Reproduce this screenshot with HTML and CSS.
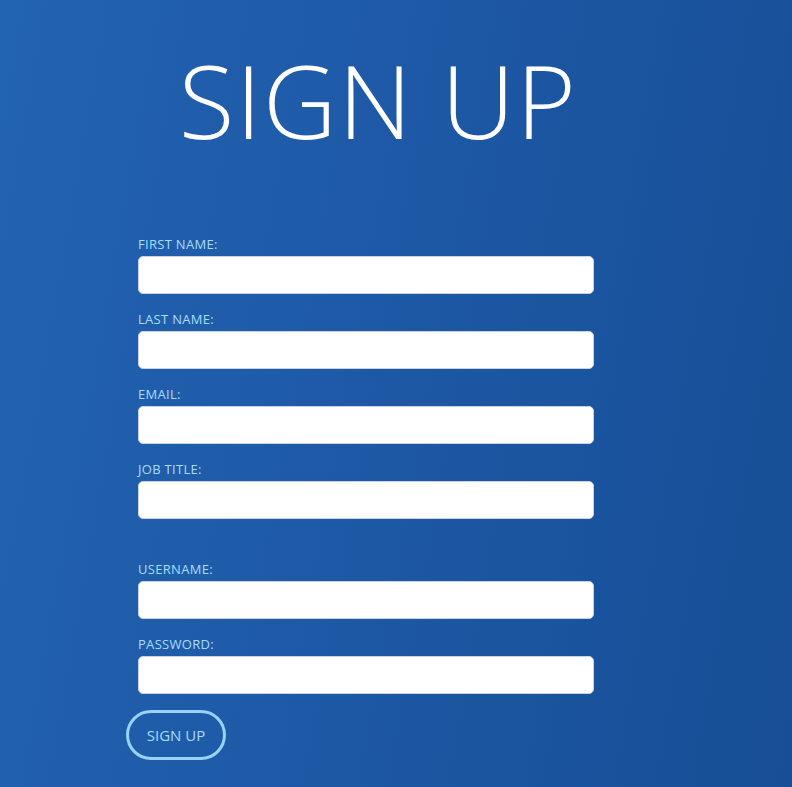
FILE: index.html
```html
<!DOCTYPE html>
<html>
<head>
<meta charset="utf-8">
<link rel="stylesheet" href="styles.css">
</head>
<body>
<div class="page">
  <h1 class="title">SIGN UP</h1>
  <form class="form">
    <div class="group">
      <label class="label">FIRST NAME:</label>
      <input class="input" type="text">
    </div>
    <div class="group">
      <label class="label">LAST NAME:</label>
      <input class="input" type="text">
    </div>
    <div class="group">
      <label class="label">EMAIL:</label>
      <input class="input" type="text">
    </div>
    <div class="group group-gap">
      <label class="label">JOB TITLE:</label>
      <input class="input" type="text">
    </div>
    <div class="group">
      <label class="label">USERNAME:</label>
      <input class="input" type="text">
    </div>
    <div class="group group-last">
      <label class="label">PASSWORD:</label>
      <input class="input" type="password">
    </div>
    <button class="btn" type="button">SIGN UP</button>
  </form>
</div>
</body>
</html>
```
FILE: styles.css
```css
html, body {
  margin: 0;
  padding: 0;
  height: 100%;
}
body {
  background: linear-gradient(100deg, #2263b2 0%, #1d58a5 50%, #174e95 100%);
  font-family: "Open Sans", "Noto Sans", sans-serif;
  overflow: hidden;
}
.page {
  padding-top: 40px;
}
.title {
  margin: 0;
  width: 756px;
  text-align: center;
  font-weight: 300;
  font-size: 102px;
  line-height: 120px;
  color: #ffffff;
  letter-spacing: 1.5px;
}
.form {
  margin: 0 0 0 126px;
  padding-top: 76px;
  display: flex;
  flex-direction: column;
}
.group {
  display: flex;
  flex-direction: column;
  margin-left: 12px;
  width: 456px;
  margin-bottom: 17px;
}
.group-gap {
  margin-bottom: 42px;
}
.group-last {
  margin-bottom: 16px;
}
.label {
  color: #a9dcfb;
  font-size: 13px;
  line-height: 17px;
  letter-spacing: 0.3px;
  margin-bottom: 3px;
}
.input {
  box-sizing: border-box;
  width: 456px;
  height: 38px;
  margin: 0;
  border: 1px solid #c9d3df;
  border-radius: 5px;
  background: #ffffff;
  outline: none;
}
.btn {
  box-sizing: border-box;
  align-self: flex-start;
  width: 100px;
  height: 50px;
  border: 3px solid #98d2f6;
  border-radius: 25px;
  background: transparent;
  color: #a9dcfb;
  font-family: "Open Sans", "Noto Sans", sans-serif;
  font-size: 15px;
  padding: 0;
}
```
